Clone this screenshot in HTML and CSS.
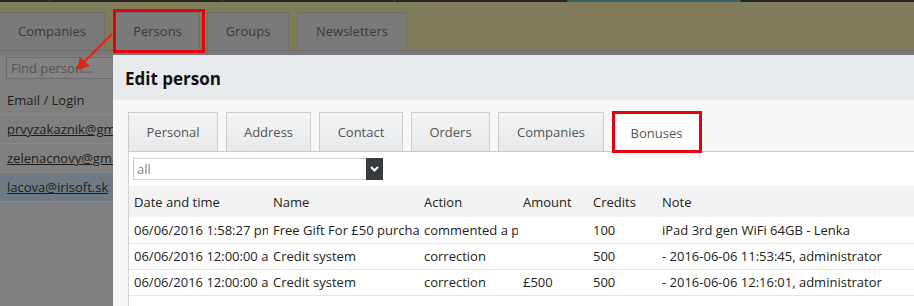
FILE: index.html
```html
<!DOCTYPE html>
<html>
<head>
<meta charset="utf-8">
<link rel="stylesheet" href="styles.css">
</head>
<body>
<div class="page">
  <div class="topline">
    <span class="seg s1"></span><span class="seg s2"></span><span class="seg s3"></span><span class="seg s4"></span><span class="seg teal"></span><span class="seg s6"></span>
  </div>
  <div class="maintabs">
    <div class="mtab t-companies">Companies</div>
    <div class="mtab t-persons">Persons</div>
    <div class="mtab t-groups">Groups</div>
    <div class="mtab t-news">Newsletters</div>
  </div>
  <div class="strip"></div>
  <div class="work">
    <div class="side">
      <div class="find"><span class="ph">Find person...</span></div>
      <div class="list">
        <div class="lrow head">Email / Login</div>
        <div class="lrow"><a>prvyzakaznik@gmail.com</a></div>
        <div class="lrow"><a>zelenacnovy@gmail.com</a></div>
        <div class="lrow sel"><a>lacova@irisoft.sk</a></div>
      </div>
    </div>
    <div class="modal">
      <div class="mhead">Edit person</div>
      <div class="mbody">
        <div class="itabs">
          <div class="itab w1">Personal</div>
          <div class="itab w2">Address</div>
          <div class="itab w3">Contact</div>
          <div class="itab w4">Orders</div>
          <div class="itab w5">Companies</div>
          <div class="itab w6 active">Bonuses</div>
        </div>
        <div class="panel">
          <div class="select">
            <span class="sv">all</span>
            <span class="sarrow"><svg width="9" height="6" viewBox="0 0 9 6"><path d="M1 1 L4.5 4.5 L8 1" fill="none" stroke="#fff" stroke-width="2"/></svg></span>
          </div>
          <table class="grid">
            <colgroup><col class="c1"><col class="c2"><col class="c3"><col class="c4"><col class="c5"><col class="c6"></colgroup>
            <thead>
              <tr><th>Date and time</th><th>Name</th><th>Action</th><th>Amount</th><th>Credits</th><th>Note</th></tr>
            </thead>
            <tbody>
              <tr><td>06/06/2016 1:58:27 pm</td><td>Free Gift For £50 purchase</td><td>commented a purchase</td><td></td><td>100</td><td>iPad 3rd gen WiFi 64GB - Lenka</td></tr>
              <tr><td>06/06/2016 12:00:00 am</td><td>Credit system</td><td>correction</td><td></td><td>500</td><td>- 2016-06-06 11:53:45, administrator</td></tr>
              <tr><td>06/06/2016 12:00:00 am</td><td>Credit system</td><td>correction</td><td>£500</td><td>500</td><td>- 2016-06-06 12:16:01, administrator</td></tr>
            </tbody>
          </table>
        </div>
      </div>
    </div>
  </div>
  <div class="mark mark-persons"></div>
  <div class="mark mark-bonuses"></div>
  <svg class="arrow" width="120" height="80" viewBox="0 0 120 80">
    <line x1="112" y1="34" x2="84" y2="62" stroke="#e3231b" stroke-width="2.2"/>
    <path d="M77 70 L80 57 L90 66 Z" fill="#e3231b"/>
  </svg>
</div>
</body>
</html>
```
FILE: styles.css
```css
* { box-sizing: border-box; }
html, body { margin: 0; padding: 0; }
body {
  width: 914px; height: 306px; overflow: hidden;
  font-family: "Open Sans", "Liberation Sans", sans-serif;
  font-size: 13px; color: #333;
  background: #7f7c5b;
}
.page { position: relative; width: 914px; height: 306px; display: flex; flex-direction: column; }

.topline { display: flex; height: 2px; background: #26261f; }
.seg { height: 2px; border-right: 1px solid #4a4a40; }
.s1 { width: 50px; } .s2 { width: 173px; } .s3 { width: 172px; } .s4 { width: 173px; }
.teal { width: 173px; background: #3f6264; }
.s6 { flex: 1; border-right: none; }

.maintabs { display: flex; align-items: flex-end; height: 48px; padding-top: 10px; background: #7f7c5b; }
.mtab {
  height: 38px; display: flex; align-items: center; justify-content: center;
  background: #7a7a7a; border: 1px solid #6d6d6a; border-bottom: none;
  color: #3a3a3a; font-size: 13px; padding-bottom: 2px;
}
.t-companies { width: 105px; margin-left: 0; border-left: none; }
.t-persons { width: 85px; margin-left: 10px; }
.t-groups { width: 82px; margin-left: 7px; }
.t-news { width: 110px; margin-left: 8px; }

.strip { height: 5px; background: #78787d; border-top: 1px solid #6c6c70; }

.work { flex: 1; display: flex; min-height: 0; }
.side { width: 113px; background: #808080; overflow: hidden; padding-top: 2px; }
.find {
  margin-left: 6px; width: 107px; height: 22px; overflow: hidden;
  border: 1px solid #6c6c6c; border-right: none; background: #838383;
  display: flex; align-items: center; padding-left: 4px;
}
.ph { color: #555; white-space: nowrap; }
.list { margin-top: 7px; }
.lrow {
  height: 29px; border-bottom: 1px solid #898989; padding-left: 7px;
  display: flex; align-items: center; white-space: nowrap; color: #1e1e1e; overflow: hidden;
}
.lrow a { color: #1e1e1e; text-decoration: underline; }
.lrow.sel { background: #6f7a84; }

.modal { flex: 1; display: flex; flex-direction: column; background: #f7f7f7; min-width: 0; }
.mhead {
  height: 45px; background: #e8ebee; padding-left: 12px;
  display: flex; align-items: center; padding-top: 2px;
  font-weight: bold; font-size: 17px; color: #111;
}
.mbody { flex: 1; padding: 12px 0 0 15px; display: flex; flex-direction: column; }
.itabs { display: flex; gap: 8px; height: 39px; }
.itab {
  height: 39px; display: flex; align-items: center; justify-content: center;
  background: linear-gradient(#f3f4f5, #e6e8ea);
  border: 1px solid #cbcbcb; border-bottom: none; color: #555;
}
.w1 { width: 90px; } .w2 { width: 85px; } .w3 { width: 84px; } .w4 { width: 79px; } .w5 { width: 106px; } .w6 { width: 89px; }
.itab.active { background: #fff; height: 40px; position: relative; z-index: 1; }
.panel {
  flex: 1; background: #fff; border-top: 1px solid #cbcbcb; border-left: 1px solid #d4d4d4;
  padding-top: 6px;
}
.select {
  margin-left: 4px; width: 250px; height: 22px; border: 1px solid #cfcfcf;
  display: flex; align-items: center; justify-content: space-between; background: #fff;
}
.sv { color: #888; padding-left: 3px; }
.sarrow { width: 17px; height: 22px; margin: -1px -1px -1px 0; background: #363b40; display: flex; align-items: center; justify-content: center; }

.grid { margin-top: 6px; width: 100%; border-collapse: collapse; table-layout: fixed; }
.c1 { width: 139px; } .c2 { width: 151px; } .c3 { width: 99px; } .c4 { width: 70px; } .c5 { width: 69px; }
.grid th, .grid td {
  text-align: left; font-weight: normal; white-space: nowrap; overflow: hidden;
  padding: 0 0 0 5px; color: #222;
}
.grid th { height: 31px; background: #f3f3f3; }
.grid td { height: 26px; border-bottom: 1px solid #e6e6e6; }

.mark { position: absolute; border: 3px solid #e4000f; }
.mark-persons { left: 113px; top: 9px; width: 92px; height: 44px; }
.mark-bonuses { left: 612px; top: 111px; width: 90px; height: 42px; z-index: 2; }
.arrow { position: absolute; left: 0; top: 0; }
```
